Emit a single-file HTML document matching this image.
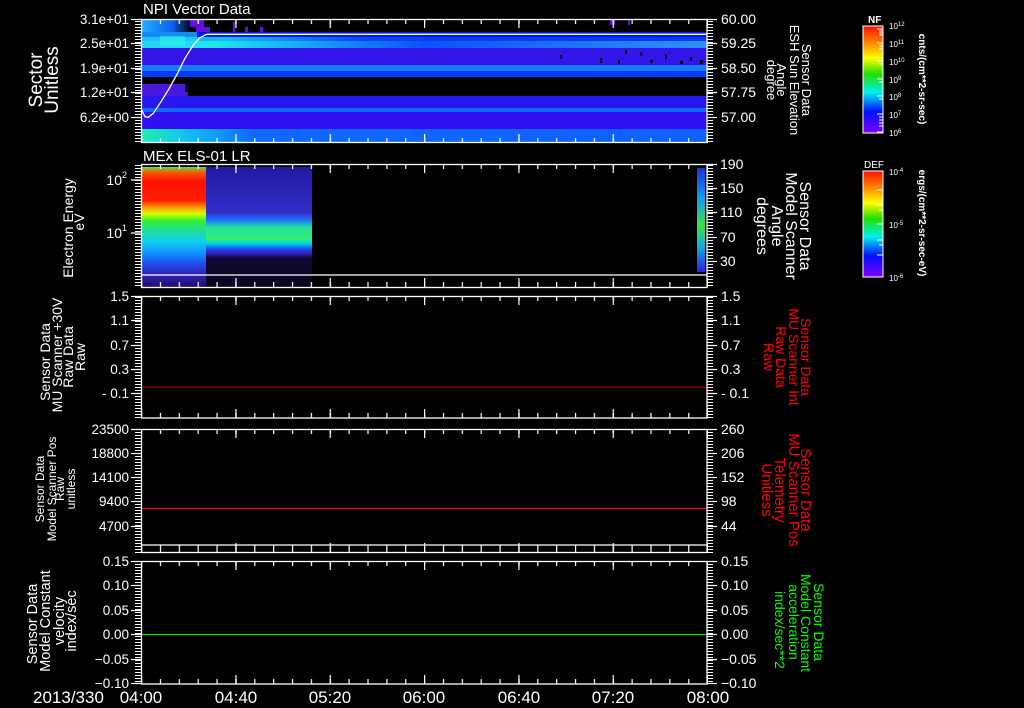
<!DOCTYPE html>
<html><head><meta charset="utf-8"><style>
html,body{margin:0;padding:0;background:#000;}
svg{display:block;}
text{font-family:"Liberation Sans",sans-serif;}
.w text,text.w{fill:#fff;}
</style></head><body>
<svg width="1024" height="708" viewBox="0 0 1024 708" xmlns="http://www.w3.org/2000/svg">
<defs>
<pattern id="xmin" patternUnits="userSpaceOnUse" x="141" y="0" width="18.867" height="5"><rect x="0" y="0" width="1.2" height="5" fill="#fff"/></pattern>
<pattern id="xmaj" patternUnits="userSpaceOnUse" x="141" y="0" width="94.33" height="9"><rect x="0" y="0" width="1.2" height="9" fill="#fff"/></pattern>
<pattern id="ymin" patternUnits="userSpaceOnUse" x="0" y="0" width="6" height="3"><rect x="0" y="0" width="6" height="1" fill="#fff"/></pattern>
<linearGradient id="rb" x1="0" y1="0" x2="0" y2="1">
<stop offset="0" stop-color="#ff1000"/><stop offset="0.15" stop-color="#ff8000"/><stop offset="0.3" stop-color="#ffff00"/><stop offset="0.45" stop-color="#20e000"/><stop offset="0.62" stop-color="#00f0f0"/><stop offset="0.8" stop-color="#0010ff"/><stop offset="1" stop-color="#8000ff"/></linearGradient>
<linearGradient id="p2l" x1="0" y1="0" x2="0" y2="1">
<stop offset="0" stop-color="#60e040"/><stop offset="0.05" stop-color="#ff5000"/><stop offset="0.12" stop-color="#ff1000"/><stop offset="0.28" stop-color="#ff2000"/><stop offset="0.34" stop-color="#ffa000"/><stop offset="0.39" stop-color="#d0ff00"/><stop offset="0.45" stop-color="#30f030"/><stop offset="0.52" stop-color="#20e090"/><stop offset="0.62" stop-color="#10d0f0"/><stop offset="0.72" stop-color="#1090ff"/><stop offset="0.8" stop-color="#2050f0"/><stop offset="0.9" stop-color="#3020b0"/><stop offset="1" stop-color="#201070"/></linearGradient>
<linearGradient id="p2r" x1="0" y1="0" x2="0" y2="1">
<stop offset="0" stop-color="#2418a0"/><stop offset="0.38" stop-color="#3030c8"/><stop offset="0.44" stop-color="#2070ff"/><stop offset="0.5" stop-color="#20e0a0"/><stop offset="0.6" stop-color="#30f070"/><stop offset="0.64" stop-color="#00d0f0"/><stop offset="0.68" stop-color="#2050f0"/><stop offset="0.72" stop-color="#3020c0"/><stop offset="0.76" stop-color="#100830"/><stop offset="1" stop-color="#0a0620"/></linearGradient>
<linearGradient id="strip" x1="0" y1="0" x2="0" y2="1">
<stop offset="0" stop-color="#2030e0"/><stop offset="0.3" stop-color="#10a0f0"/><stop offset="0.55" stop-color="#40e040"/><stop offset="0.75" stop-color="#10b0e0"/><stop offset="1" stop-color="#3020e0"/></linearGradient>
<linearGradient id="b3" x1="0" y1="0" x2="1" y2="0">
<stop offset="0" stop-color="#30c8ff"/><stop offset="0.12" stop-color="#20e8f0"/><stop offset="0.5" stop-color="#1050ff"/><stop offset="0.75" stop-color="#2070ff"/><stop offset="1" stop-color="#3090ff"/></linearGradient>
<linearGradient id="b2" x1="0" y1="0" x2="1" y2="0">
<stop offset="0" stop-color="#20a0ff"/><stop offset="0.15" stop-color="#10c0f0"/><stop offset="0.4" stop-color="#0840f8"/><stop offset="1" stop-color="#0838f8"/></linearGradient>
<linearGradient id="bot" x1="0" y1="0" x2="1" y2="0">
<stop offset="0" stop-color="#20f0b0"/><stop offset="0.08" stop-color="#10c0f0"/><stop offset="0.2" stop-color="#1068ff"/><stop offset="1" stop-color="#1060ff"/></linearGradient>
<linearGradient id="top" x1="0" y1="0" x2="1" y2="0">
<stop offset="0" stop-color="#20b0ff"/><stop offset="0.6" stop-color="#1060f0"/><stop offset="1" stop-color="#000"/></linearGradient>
</defs>

<g class="w">
<text x="143" y="14" font-size="15">NPI Vector Data</text>
<text x="143" y="161" font-size="15">MEx ELS-01 LR</text>
</g>

<!-- Panel 1 data -->
<rect x="142" y="32" width="565" height="5" fill="#0018f0"/>
<rect x="142" y="37" width="565" height="4" fill="url(#b2)"/>
<rect x="142" y="41" width="565" height="7" fill="url(#b3)"/>
<rect x="142" y="48" width="565" height="17" fill="#3414e8"/>
<rect x="142" y="65" width="565" height="6" fill="#1878ff"/>
<rect x="142" y="71" width="565" height="6" fill="#0838f8"/>
<rect x="142" y="96" width="565" height="12" fill="#2818f0"/>
<rect x="142" y="108" width="565" height="4" fill="#1068ff"/>
<rect x="142" y="112" width="565" height="17" fill="#3010f0"/>
<rect x="142" y="129" width="565" height="13" fill="url(#bot)"/>
<rect x="142" y="19" width="50" height="13" fill="url(#top)"/>
<rect x="142" y="32" width="55" height="16" fill="#20d8f0" opacity="0.6"/>
<rect x="160" y="36" width="25" height="10" fill="#30ffe0" opacity="0.5"/>
<rect x="142" y="84" width="43" height="8" fill="#4818e0"/>
<rect x="142" y="92" width="46" height="4" fill="#4818e0"/>
<rect x="190" y="19" width="14" height="8" fill="#6010e0"/>
<rect x="196" y="27" width="14" height="5" fill="#6010e0"/>
<rect x="233" y="22" width="2" height="10" fill="#6010e0"/>
<rect x="245" y="27" width="3" height="5" fill="#6010e0"/>
<rect x="260" y="27" width="3" height="5" fill="#6010e0"/>
<rect x="628" y="20" width="2" height="5" fill="#6010e0"/>
<rect x="610" y="20" width="5" height="5" fill="#6010e0"/>
<g fill="#000">
<rect x="560" y="55" width="2" height="4"/><rect x="600" y="58" width="2" height="5"/><rect x="640" y="52" width="2" height="4"/><rect x="650" y="60" width="3" height="3"/><rect x="665" y="54" width="2" height="5"/><rect x="680" y="61" width="3" height="3"/><rect x="690" y="57" width="2" height="4"/><rect x="700" y="60" width="3" height="4"/><rect x="618" y="60" width="2" height="4"/><rect x="625" y="50" width="2" height="4"/>
</g>
<polyline points="141.7,110 145,116.7 148.3,117.3 153.3,113.3 160,103.3 168.3,90 176.7,75 185,58.3 193.3,45 200,37.7 206.7,34.3 707,34.3" fill="none" stroke="#fff" stroke-width="1.3"/>

<!-- Panel 2 data -->
<rect x="142" y="167" width="64" height="120" fill="url(#p2l)"/>
<rect x="206" y="167" width="106" height="120" fill="url(#p2r)"/>
<rect x="697" y="168" width="8" height="104" fill="url(#strip)"/>
<line x1="141" y1="275" x2="707" y2="275" stroke="#fff" stroke-width="1.3"/>

<!-- Panel lines -->
<line x1="142" y1="387" x2="707" y2="387" stroke="#c00000" stroke-width="1"/>
<line x1="142" y1="508.5" x2="707" y2="508.5" stroke="#ff0000" stroke-width="1.3"/>
<line x1="142" y1="634.5" x2="707" y2="634.5" stroke="#00e000" stroke-width="1.3"/>
<line x1="141" y1="545" x2="707" y2="545" stroke="#fff" stroke-width="1.3"/>

<!-- Frames -->
<g fill="none" stroke="#fff" stroke-width="1.3">
<rect x="141.5" y="19.5" width="565.5" height="123"/>
<rect x="141.5" y="164.5" width="565.5" height="123"/>
<rect x="141.5" y="296.5" width="565.5" height="121.5"/>
<rect x="141.5" y="429.5" width="565.5" height="123"/>
<rect x="141.5" y="561.5" width="565.5" height="122.5"/>
</g>

<!-- X ticks -->
<g>
<rect x="141" y="19" width="567" height="5" fill="url(#xmin)"/><rect x="141" y="19" width="567" height="9" fill="url(#xmaj)"/>
<rect x="141" y="138" width="567" height="5" fill="url(#xmin)"/><rect x="141" y="134" width="567" height="9" fill="url(#xmaj)"/>
<rect x="141" y="164" width="567" height="5" fill="url(#xmin)"/><rect x="141" y="164" width="567" height="9" fill="url(#xmaj)"/>
<rect x="141" y="282" width="567" height="5" fill="url(#xmin)"/><rect x="141" y="278" width="567" height="9" fill="url(#xmaj)"/>
<rect x="141" y="296" width="567" height="5" fill="url(#xmin)"/><rect x="141" y="296" width="567" height="9" fill="url(#xmaj)"/>
<rect x="141" y="413" width="567" height="5" fill="url(#xmin)"/><rect x="141" y="409" width="567" height="9" fill="url(#xmaj)"/>
<rect x="141" y="429" width="567" height="5" fill="url(#xmin)"/><rect x="141" y="429" width="567" height="9" fill="url(#xmaj)"/>
<rect x="141" y="545" width="567" height="7" fill="url(#xmin)"/><rect x="141" y="543" width="567" height="9" fill="url(#xmaj)"/>
<rect x="141" y="561" width="567" height="5" fill="url(#xmin)"/><rect x="141" y="561" width="567" height="9" fill="url(#xmaj)"/>
<rect x="141" y="679" width="567" height="5" fill="url(#xmin)"/><rect x="141" y="675" width="567" height="9" fill="url(#xmaj)"/>
</g>

<!-- Y minor ticks -->
<g>
<rect x="135" y="19" width="6" height="124" fill="url(#ymin)"/><rect x="707" y="19" width="6" height="124" fill="url(#ymin)"/>
<rect x="135" y="164" width="6" height="124" fill="url(#ymin)"/><rect x="707" y="164" width="6" height="124" fill="url(#ymin)"/>
<rect x="135" y="296" width="6" height="122" fill="url(#ymin)"/><rect x="707" y="296" width="6" height="122" fill="url(#ymin)"/>
<rect x="135" y="429" width="6" height="124" fill="url(#ymin)"/><rect x="707" y="429" width="6" height="124" fill="url(#ymin)"/>
<rect x="135" y="561" width="6" height="123" fill="url(#ymin)"/><rect x="707" y="561" width="6" height="123" fill="url(#ymin)"/>
</g>
<g stroke="#fff" stroke-width="1.2">
<path d="M131 19.5H141M131 43.5H141M131 68.5H141M131 92.5H141M131 117.5H141"/>
<path d="M707 19.5H717M707 43.5H717M707 68.5H717M707 92.5H717M707 117.5H717"/>
<path d="M131 180H141M131 233H141M707 164.5H717M707 188.5H717M707 212.5H717M707 237.5H717M707 261.5H717"/>
<path d="M131 296.5H141M131 320.5H141M131 345.5H141M131 369.5H141M131 393.5H141M707 296.5H717M707 320.5H717M707 345.5H717M707 369.5H717M707 393.5H717"/>
<path d="M131 429.5H141M131 453.5H141M131 477.5H141M131 501.5H141M131 526.5H141M707 429.5H717M707 453.5H717M707 477.5H717M707 501.5H717M707 526.5H717"/>
<path d="M131 561.5H141M131 585.5H141M131 610.5H141M131 634.5H141M131 659.5H141M131 683.5H141M707 561.5H717M707 585.5H717M707 610.5H717M707 634.5H717M707 659.5H717M707 683.5H717"/>
</g>

<g class="w">
<!-- Left tick labels -->
<g font-size="13.5" text-anchor="end">
<text x="129" y="24">3.1e+01</text><text x="129" y="48">2.5e+01</text><text x="129" y="73">1.9e+01</text><text x="129" y="97">1.2e+01</text><text x="129" y="122">6.2e+00</text>
<text x="127" y="185" font-size="14">10<tspan font-size="9" dy="-7">2</tspan></text>
<text x="127" y="238" font-size="14">10<tspan font-size="9" dy="-7">1</tspan></text>
<text x="129" y="301">1.5</text><text x="129" y="325">1.1</text><text x="129" y="350">0.7</text><text x="129" y="374">0.3</text><text x="129" y="398">- 0.1</text>
<text x="129" y="434">23500</text><text x="129" y="458">18800</text><text x="129" y="482">14100</text><text x="129" y="506">9400</text><text x="129" y="531">4700</text>
<text x="129" y="566">0.15</text><text x="129" y="590">0.10</text><text x="129" y="615">0.05</text><text x="129" y="639">0.00</text><text x="129" y="664">−0.05</text><text x="129" y="688">−0.10</text>
</g>
<!-- Right tick labels -->
<g font-size="14">
<text x="721" y="24">60.00</text><text x="721" y="48">59.25</text><text x="721" y="73">58.50</text><text x="721" y="97">57.75</text><text x="721" y="122">57.00</text>
<text x="720" y="169">190</text><text x="720" y="193">150</text><text x="720" y="217">110</text><text x="720" y="242">70</text><text x="720" y="266">30</text>
<text x="721" y="301">1.5</text><text x="721" y="325">1.1</text><text x="721" y="350">0.7</text><text x="721" y="374">0.3</text><text x="721" y="398">- 0.1</text>
<text x="721" y="434">260</text><text x="721" y="458">206</text><text x="721" y="482">152</text><text x="721" y="506">98</text><text x="721" y="531">44</text>
<text x="721" y="566">0.15</text><text x="721" y="590">0.10</text><text x="721" y="615">0.05</text><text x="721" y="639">0.00</text><text x="721" y="664">−0.05</text><text x="721" y="688">−0.10</text>
</g>

<!-- Time axis -->
<g font-size="17">
<text x="33" y="703">2013/330</text>
<text x="141" y="703" text-anchor="middle">04:00</text>
<text x="236" y="703" text-anchor="middle">04:40</text>
<text x="330" y="703" text-anchor="middle">05:20</text>
<text x="424" y="703" text-anchor="middle">06:00</text>
<text x="519" y="703" text-anchor="middle">06:40</text>
<text x="613" y="703" text-anchor="middle">07:20</text>
<text x="708" y="703" text-anchor="middle">08:00</text>
</g>

<!-- Left axis titles -->
<g text-anchor="middle">
<text transform="translate(42,80) rotate(-90)" font-size="19">Sector</text>
<text transform="translate(58,80) rotate(-90)" font-size="19">Unitless</text>
<text transform="translate(73,228) rotate(-90)" font-size="14">Electron Energy</text>
<text transform="translate(84,222) rotate(-90)" font-size="14">eV</text>
<g font-size="14"><text transform="translate(50,362) rotate(-90)">Sensor Data</text><text transform="translate(62,355) rotate(-90)">MU Scanner +30V</text><text transform="translate(73,357) rotate(-90)">Raw Data</text><text transform="translate(85,357) rotate(-90)">Raw</text></g>
<g font-size="12"><text transform="translate(44,489) rotate(-90)">Sensor Data</text><text transform="translate(56,489) rotate(-90)">Model Scanner Pos</text><text transform="translate(64,489) rotate(-90)">Raw</text><text transform="translate(75,489) rotate(-90)">unitless</text></g>
<g font-size="14.5"><text transform="translate(37,624) rotate(-90)">Sensor Data</text><text transform="translate(50,621) rotate(-90)">Model Constant</text><text transform="translate(64,621) rotate(-90)">velocity</text><text transform="translate(76,621) rotate(-90)">index/sec</text></g>
</g>

<!-- Right axis titles (white) -->
<g text-anchor="middle">
<g font-size="13"><text transform="translate(802,80) rotate(90)">Sensor Data</text><text transform="translate(790,80) rotate(90)">ESH Sun Elevation</text><text transform="translate(777,80) rotate(90)">Angle</text><text transform="translate(767,80) rotate(90)">degree</text></g>
<g font-size="16"><text transform="translate(800,226) rotate(90)">Sensor Data</text><text transform="translate(786,226) rotate(90)">Model Scanner</text><text transform="translate(772,226) rotate(90)">Angle</text><text transform="translate(757,226) rotate(90)">degrees</text></g>
</g>
</g>

<!-- Right axis titles (colored) -->
<g text-anchor="middle">
<g font-size="14" fill="#ff0000"><text transform="translate(801,357) rotate(90)">Sensor Data</text><text transform="translate(789,357) rotate(90)">MU Scanner Int</text><text transform="translate(776,357) rotate(90)">Raw Data</text><text transform="translate(764,357) rotate(90)">Raw</text></g>
<g font-size="15" fill="#ff0000"><text transform="translate(801,490) rotate(90)">Sensor Data</text><text transform="translate(789,490) rotate(90)">MU Scanner Pos</text><text transform="translate(775,490) rotate(90)">Telemetry</text><text transform="translate(762,490) rotate(90)">Unitless</text></g>
<g font-size="14" fill="#00ff00"><text transform="translate(814,622) rotate(90)">Sensor Data</text><text transform="translate(801,623) rotate(90)">Model Constant</text><text transform="translate(789,622) rotate(90)">acceleration</text><text transform="translate(775,630) rotate(90)">index/sec**2</text></g>
</g>

<!-- Colorbars -->
<rect x="863" y="26" width="20" height="107" fill="url(#rb)" stroke="#fff" stroke-width="1"/>
<rect x="863" y="171" width="20" height="106" fill="url(#rb)" stroke="#fff" stroke-width="1"/>
<g stroke="#fff" stroke-width="1">
<path d="M877 29H883M879 31H883M879 33H883M879 35H883M877 43H883M879 46H883M879 49H883M877 61H883M879 64H883M877 79H883M879 82H883M877 96H883M879 99H883M877 114H883M879 117H883M879 120H883M879 123H883M879 126H883M877 132H883"/>
<path d="M877 224H883M877 190H883M877 205H883M877 240H883M877 255H883M879 210H883M879 245H883"/>
</g>
<g class="w">
<text x="868" y="23" font-size="10" font-weight="bold">NF</text>
<text x="864" y="168" font-size="10">DEF</text>
<g font-size="8">
<text x="889" y="29">10<tspan font-size="6" dy="-3">12</tspan></text>
<text x="889" y="47">10<tspan font-size="6" dy="-3">11</tspan></text>
<text x="889" y="65">10<tspan font-size="6" dy="-3">10</tspan></text>
<text x="889" y="83">10<tspan font-size="6" dy="-3">9</tspan></text>
<text x="889" y="100">10<tspan font-size="6" dy="-3">8</tspan></text>
<text x="889" y="118">10<tspan font-size="6" dy="-3">7</tspan></text>
<text x="889" y="136">10<tspan font-size="6" dy="-3">6</tspan></text>
<text x="889" y="175">10<tspan font-size="6" dy="-3">-4</tspan></text>
<text x="889" y="228">10<tspan font-size="6" dy="-3">-5</tspan></text>
<text x="889" y="281">10<tspan font-size="6" dy="-3">-6</tspan></text>
</g>
<text transform="translate(919,79) rotate(90)" font-size="10" text-anchor="middle" font-weight="bold">cnts/(cm**2-sr-sec)</text>
<text transform="translate(919,223) rotate(90)" font-size="10" text-anchor="middle" font-weight="bold">ergs/(cm**2-sr-sec-eV)</text>
</g>
</svg>
</body></html>
